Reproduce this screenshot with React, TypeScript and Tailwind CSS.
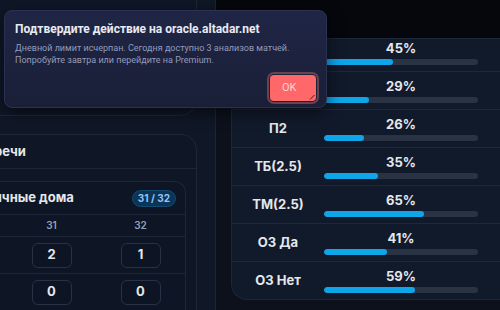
const ROWS = [
  { label: 'П1', value: 45 },
  { label: 'Х', value: 29 },
  { label: 'П2', value: 26 },
  { label: 'ТБ(2.5)', value: 35 },
  { label: 'ТМ(2.5)', value: 65 },
  { label: 'ОЗ Да', value: 41 },
  { label: 'ОЗ Нет', value: 59 },
];

const HOUSES = [
  { id: 'win', a: 2, b: 1 },
  { id: 'draw', a: 0, b: 0 },
];

const App = () => {
  return (
    <div
      className="relative w-[500px] h-[310px] overflow-hidden bg-[#0b101a] flex text-[#e5e7eb]"
      style={{ fontFamily: 'Inter, "Noto Sans", sans-serif' }}
    >
      {/* Left column */}
      <div className="w-[258px] -ml-[42px] shrink-0 h-full bg-[#101726] border-r border-[#1c2536] flex flex-col gap-[18px] pr-[18px]">
        {/* Card hidden under the dialog */}
        <div className="h-[136px] shrink-0 -mt-[20px] rounded-b-[16px] border border-[#1d2738] bg-[#0f1727]" />

        {/* Встречи card */}
        <div className="flex-1 rounded-t-[16px] border border-b-0 border-[#1d2738] bg-[#0f1727] flex flex-col">
          <div className="h-[34px] shrink-0 flex items-center px-3 border-b border-[#1d2738]">
            <span className="text-[13px] font-bold">Встречи</span>
          </div>
          <div className="pt-[12px] pl-3 pr-[10px]">
            <div className="rounded-t-[12px] border border-b-0 border-[#1d2738] bg-[#0e1626]">
              <div className="h-[33px] flex items-center justify-between pl-[12px] pr-[9px] border-b border-[#1d2738]">
                <span className="text-[13px] font-bold">Личные дома</span>
                <span className="h-[17px] px-[5px] rounded-full bg-[#0b3556] border border-[#124a70] text-[10px] font-bold text-[#93c5fd] flex items-center">
                  31 / 32
                </span>
              </div>
              <div className="grid grid-cols-[35px_1fr_1fr] h-[22px] items-center border-b border-[#1d2738] text-[10px] font-semibold text-[#94a3b8]">
                <span />
                <span className="text-center">31</span>
                <span className="text-center">32</span>
              </div>
              {HOUSES.map((h) => (
                <div
                  key={h.id}
                  className="grid grid-cols-[35px_1fr_1fr] h-[37px] items-center border-b border-[#1d2738]"
                >
                  <span />
                  <div className="flex justify-center">
                    <div className="w-[40px] h-[25px] rounded-[6px] border border-[#283244] bg-[#0d1524] flex items-center justify-center text-[13px] font-bold">
                      {h.a}
                    </div>
                  </div>
                  <div className="flex justify-center">
                    <div className="w-[40px] h-[25px] rounded-[6px] border border-[#283244] bg-[#0d1524] flex items-center justify-center text-[13px] font-bold">
                      {h.b}
                    </div>
                  </div>
                </div>
              ))}
            </div>
          </div>
        </div>
      </div>

      {/* Right column */}
      <div className="flex-1 flex flex-col bg-[#0c111c]">
        <div className="h-[38px] shrink-0 bg-[#05070c]" />
        <div className="ml-[15px] w-[290px] rounded-bl-[16px] border-t border-l border-b border-[#1d2738] bg-[#111a2b] flex flex-col overflow-hidden">
          {ROWS.map((r, i) => (
            <div
              key={r.label}
              className={`flex items-center ${i === 0 ? 'h-[32px]' : 'h-[38px] border-t border-[#1e2838]'}`}
            >
              <div className="w-[92px] text-center text-[13px] font-bold">{i === 0 ? '' : r.label}</div>
              <div className={`w-[154px] flex flex-col ${i === 0 ? '-mt-[5px]' : ''}`}>
                <div className="text-center text-[13px] font-bold leading-[14px]">{r.value}%</div>
                <div className="mt-[4px] h-[6px] rounded-full bg-[#2a3343] overflow-hidden">
                  <div className="h-full rounded-full bg-[#0ea5e9]" style={{ width: `${r.value}%` }} />
                </div>
              </div>
            </div>
          ))}
        </div>
      </div>

      {/* Browser confirm dialog */}
      <div
        className="absolute left-[4px] top-[10px] w-[323px] h-[98px] rounded-[8px] border border-[#2a3152] bg-gradient-to-b from-[#1f2645] to-[#1a1f37] shadow-[0_4px_16px_rgba(0,0,0,0.6)] px-[10px] pt-[11px]"
        style={{ fontFamily: 'Roboto, "Noto Sans", sans-serif' }}
      >
        <div className="text-[12px] font-bold text-[#e8eaf2] leading-[14px]">
          Подтвердите действие на oracle.altadar.net
        </div>
        <div className="mt-[6px] text-[9px] leading-[12px] text-[#929bbb] whitespace-nowrap">
          Дневной лимит исчерпан. Сегодня доступно 3 анализов матчей.
          <br />
          Попробуйте завтра или перейдите на Premium.
        </div>
        <div className="flex justify-end mt-[9px]">
          <button className="relative w-[46px] h-[26px] rounded-[4px] bg-[#ff6868] outline outline-2 outline-offset-1 outline-[#6b4250] text-[11px] text-[#ffd2d2] text-left pl-[12px]">
            OK
            <svg className="absolute right-[1px] bottom-[1px]" width="6" height="6" viewBox="0 0 6 6">
              <path d="M1 5.5 L5.5 1" stroke="#3a1d24" strokeWidth="1" />
            </svg>
          </button>
        </div>
      </div>
    </div>
  );
};

export default App;
